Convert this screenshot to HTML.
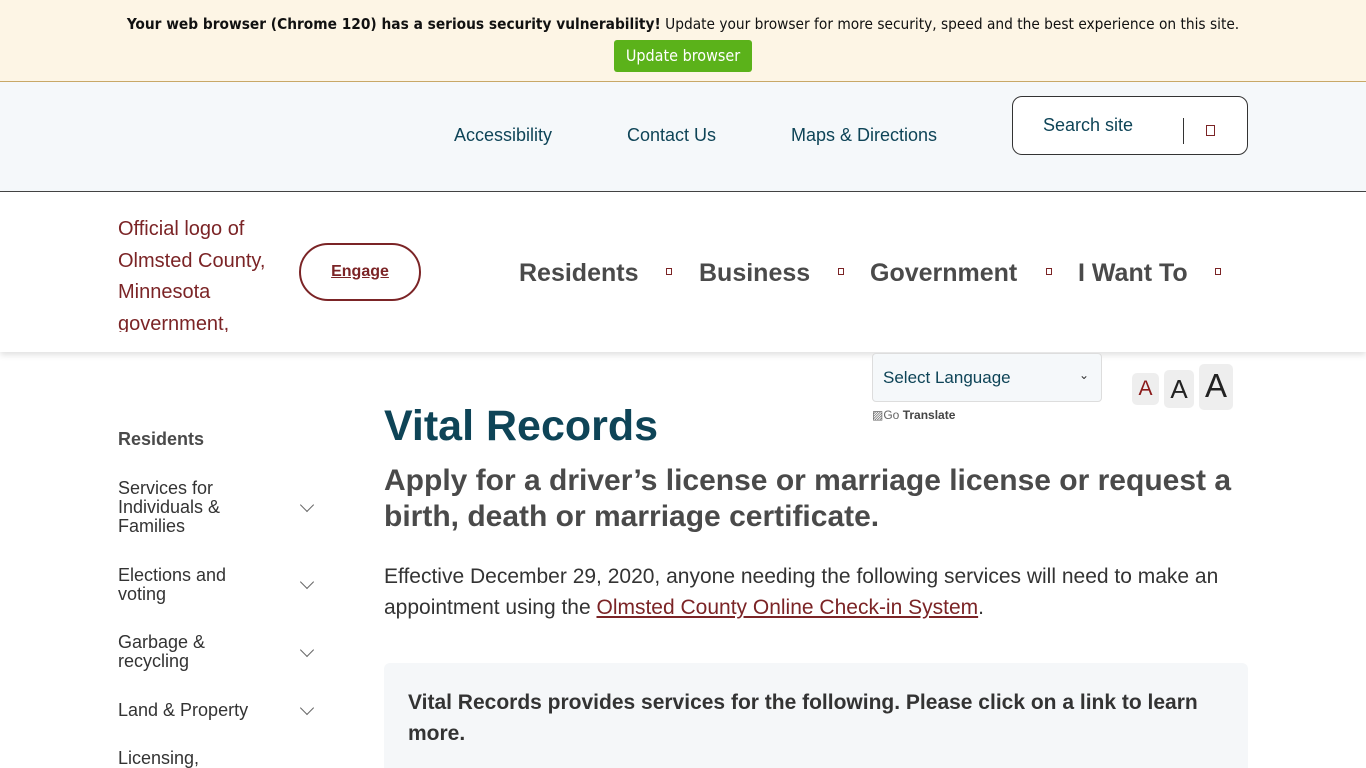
<!DOCTYPE html>
<html style="height:768px;overflow:hidden"><head><meta charset="utf-8"><style>
*{margin:0;padding:0;box-sizing:border-box}
body{width:1366px;height:768px;overflow:hidden;font-family:"Liberation Sans",Arial,sans-serif;background:#fff;position:relative}
.a{position:absolute;white-space:nowrap}
.banner{position:absolute;left:0;top:0;width:1366px;height:82px;background:#fdf5e5;border-bottom:1px solid #c8a867}
.util{position:absolute;left:0;top:82px;width:1366px;height:110px;background:#f5f8fa;border-bottom:1px solid #444}
.util .a{font-size:18px;color:#0e4457;top:43px}
.hdr{position:absolute;left:0;top:192px;width:1366px;height:160px;background:#fff;box-shadow:0 3px 6px rgba(0,0,0,.12)}
.nav{font-size:25px;font-weight:bold;color:#4a4a4a;top:67px}
.sq{width:6px;height:7px;border:1px solid #7b2426;top:76px}
.side{font-size:18px;color:#333;line-height:19px}
.chev{width:10px;height:10px;border-right:1px solid #666;border-bottom:1px solid #666;transform:rotate(45deg)}
</style></head><body>
<div class="banner">
<div class="a" style="left:0;width:1366px;text-align:center;top:15px;font-size:15.3px;color:#111;font-family:'DejaVu Sans Condensed','Liberation Sans Narrow',sans-serif"><b>Your web browser (Chrome 120) has a serious security vulnerability!</b> Update your browser for more security, speed and the best experience on this site.</div>
<div class="a" style="left:614px;top:40px;width:138px;height:32px;background:#5bb21a;border-radius:3px;color:#fff;font-size:16px;text-align:center;line-height:32px;font-family:'DejaVu Sans Condensed',sans-serif">Update browser</div>
</div>
<div class="util">
<div class="a" style="left:454px">Accessibility</div>
<div class="a" style="left:627px">Contact Us</div>
<div class="a" style="left:791px">Maps &amp; Directions</div>
<div class="a" style="left:1012px;top:14px;width:236px;height:59px;border:1px solid #333;border-radius:10px;background:#fff"></div>
<div class="a" style="left:1043px;top:33px">Search site</div>
<div class="a" style="left:1183px;top:36px;width:1px;height:26px;background:#333"></div>
<div class="a" style="left:1206px;top:43px;width:9px;height:11px;border:1px solid #7b2426"></div>
</div>
<div class="hdr">
<div class="a" style="left:118px;top:22px;width:160px;font-size:20px;line-height:31.5px;color:#7b2426;white-space:normal;height:118px;overflow:hidden">Official logo of Olmsted County, Minnesota government,</div>
<div class="a" style="left:299px;top:51px;width:122px;height:58px;border:2px solid #7b2426;border-radius:29px;text-align:center;line-height:54px;font-size:16px;font-weight:bold;color:#7b2426;text-decoration:underline">Engage</div>
<div class="a nav" style="left:519px">Residents</div><div class="a sq" style="left:666px"></div>
<div class="a nav" style="left:699px">Business</div><div class="a sq" style="left:838px"></div>
<div class="a nav" style="left:870px">Government</div><div class="a sq" style="left:1046px"></div>
<div class="a nav" style="left:1078px">I Want To</div><div class="a sq" style="left:1215px"></div>
</div>
<div class="a" style="left:872px;top:353px;width:230px;height:49px;background:#f5f8fa;border:1px solid #ddd;border-radius:4px"></div>
<div class="a" style="left:883px;top:368px;font-size:17px;color:#0e4457">Select Language</div>
<div class="a" style="left:1079px;top:368px;font-size:12px;color:#333">&#8964;</div>
<div class="a" style="left:872px;top:408px;font-size:12px;color:#444;font-weight:bold"><span style="font-weight:normal;color:#666">▨Go</span> Translate</div>
<div class="a" style="left:1132px;top:373px;width:27px;height:32px;background:#eee;border-radius:5px;text-align:center;font-size:21px;line-height:32px;color:#8b1a1a">A</div>
<div class="a" style="left:1164px;top:370px;width:30px;height:38px;background:#eee;border-radius:5px;text-align:center;font-size:26px;line-height:38px;color:#222">A</div>
<div class="a" style="left:1199px;top:364px;width:34px;height:46px;background:#eee;border-radius:5px;text-align:center;font-size:33px;line-height:44px;color:#222">A</div>

<div class="a" style="left:118px;top:429px;font-size:18px;font-weight:bold;color:#4a4a4a">Residents</div>
<div class="a side" style="left:118px;top:479px">Services for<br>Individuals &amp;<br>Families</div><div class="a chev" style="left:302px;top:500px"></div>
<div class="a side" style="left:118px;top:566px">Elections and<br>voting</div><div class="a chev" style="left:302px;top:577px"></div>
<div class="a side" style="left:118px;top:633px">Garbage &amp;<br>recycling</div><div class="a chev" style="left:302px;top:645px"></div>
<div class="a side" style="left:118px;top:701px">Land &amp; Property</div><div class="a chev" style="left:302px;top:703px"></div>
<div class="a side" style="left:118px;top:749px">Licensing,</div>

<div class="a" style="left:384px;top:402px;font-size:43px;font-weight:bold;color:#0e4457">Vital Records</div>
<div class="a" style="left:384px;top:463px;font-size:30px;line-height:36px;font-weight:bold;color:#4a4a4a">Apply for a driver’s license or marriage license or request a<br>birth, death or marriage certificate.</div>
<div class="a" style="left:384px;top:561px;font-size:21px;line-height:31px;color:#333">Effective December 29, 2020, anyone needing the following services will need to make an<br>appointment using the <span style="color:#7b2426;text-decoration:underline">Olmsted County Online Check-in System</span>.</div>
<div class="a" style="left:384px;top:663px;width:864px;height:105px;background:#f5f7f9;border-radius:6px 6px 0 0"></div>
<div class="a" style="left:408px;top:687px;font-size:21px;line-height:31px;font-weight:bold;color:#333">Vital Records provides services for the following. Please click on a link to learn<br>more.</div>
</body></html>
